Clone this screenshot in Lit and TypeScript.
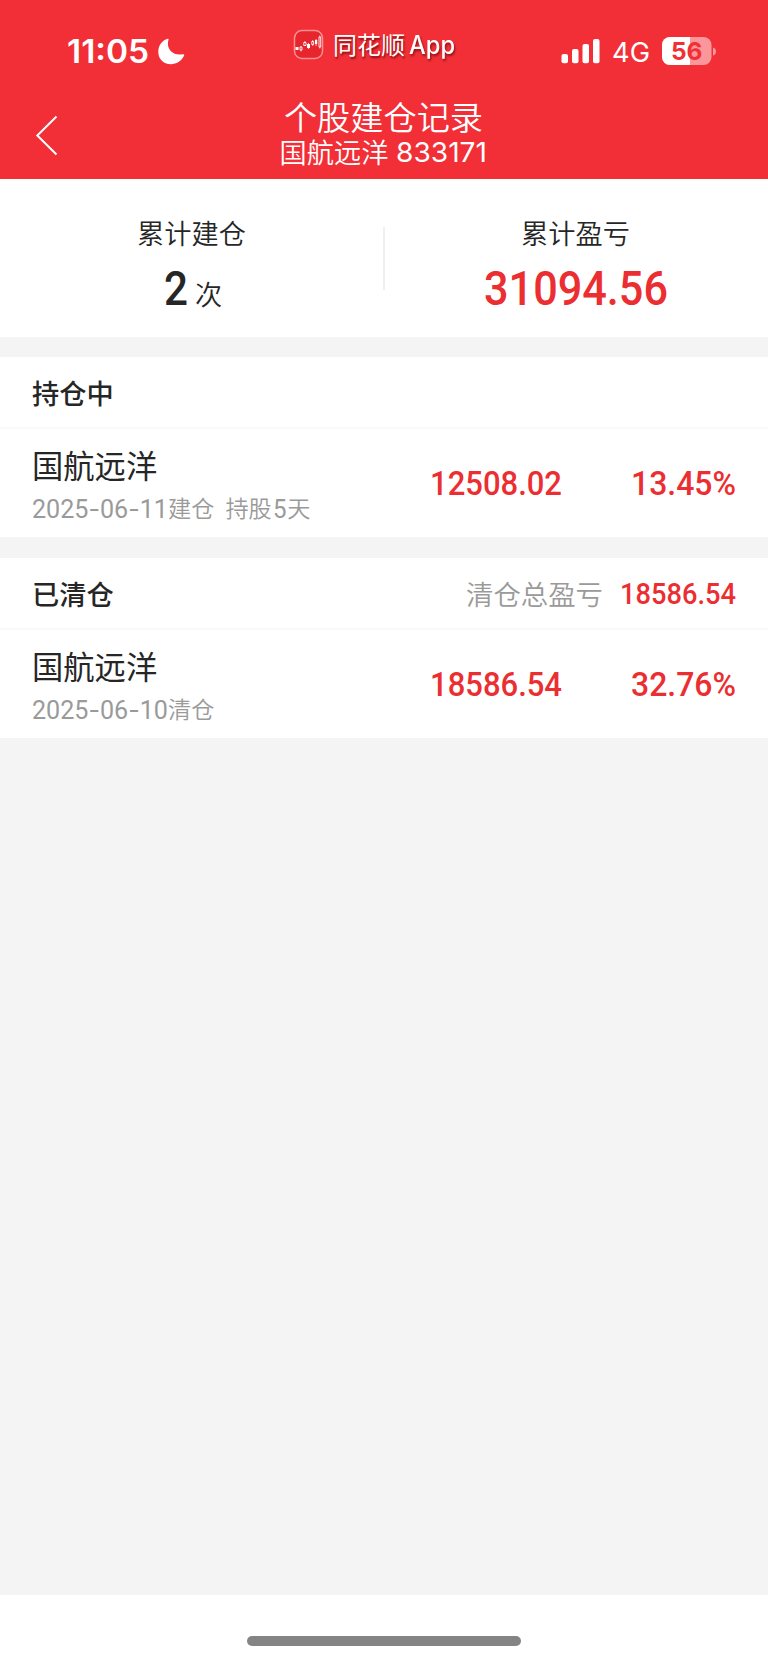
import { LitElement, html, css, svg } from "lit";
import { customElement, property } from "lit/decorators.js";

/** A single line of figures set to an exact advance width. */
@customElement("fit-text")
class FitText extends LitElement {
  @property() text = "";
  @property({ type: Number }) width = 100;
  @property({ type: Number }) size = 24;
  static styles = css`
    :host { display: block; flex: none; }
    svg { display: block; overflow: visible; }
    .dash { font-family: Inter, sans-serif; }
  `;
  render() {
    const h = Math.round(this.size * 1.2);
    const parts = this.text.split(/(-)/);
    return html`<svg width=${this.width} height=${h}>
      <text x="0" y=${this.size} fill="currentColor" font-size=${this.size}
        textLength=${this.width} lengthAdjust="spacingAndGlyphs">${parts.map((p) =>
          p === "-" ? svg`<tspan class="dash">-</tspan>` : svg`<tspan>${p}</tspan>`)}</text>
    </svg>`;
  }
}

@customElement("status-bar")
class StatusBar extends LitElement {
  static styles = css`
    :host { display: flex; height: 96px; color: #fff; font-family: Inter, sans-serif; align-items: flex-start; }
    svg { display: block; }
    .time { margin: 31px 0 0 67px; font-weight: 600; }
    .moon { margin: 38px 0 0 9px; }
    .icon { margin: 29px 0 0 108px; }
    .cjk { margin: 26px 0 0 9px; font: 400 24px/36px "Noto Sans CJK SC", sans-serif; width: 72px; white-space: nowrap; text-shadow: 1px 2px 2px rgba(90, 0, 0, .7); }
    .app { margin: 29px 0 0 4px; font-weight: 500; filter: drop-shadow(1px 2px 1px rgba(90, 0, 0, .65)); }
    .bars { margin: 38px 0 0 106px; }
    .net { margin: 35px 0 0 12px; }
    .battery { margin: 37px 0 0 12px; }
    .level { font-weight: 700; }
  `;
  render() {
    return html`
      <fit-text class="time" text="11:05" size="32" width="82"></fit-text>
      <svg class="moon" width="27" height="27" viewBox="0 0 27 27"><path fill="#fff" d="M9.7.8C10.500 .500 10.800 1 10.500 1.700C8 9.500 13.500 18 24.500 16.300C25.800 16 26.500 16.500 26.100 17.500C20.500 30.500 .3 28.500.3 13.700C.3 7.500 4 2.500 9.700.8Z"/></svg>
      <svg class="icon" width="31" height="31" viewBox="0 0 31 31">
        <rect x="1.500" y="1.500" width="28" height="28" rx="7.500" fill="#e6252d" stroke="#fa8f94" stroke-width="1.500"/>
        <g fill="#fff"><path d="M2.500 18h3v3h-3ZM14 15h3v4h-3ZM22 11h2.200v4H22Z"/></g>
        <path d="M15.500 14v6M23.100 10v7" stroke="#fff" stroke-width=".7"/>
        <g fill="none" stroke="#fff" stroke-width=".9"><path d="M7 18h2v3h-2ZM10.800 13.500h2.200v3h-2.200ZM18.800 12.500h1.800v3h-1.800ZM26 8h1.700v10h-1.700Z"/><path d="M8 17v1M8 21v1.500M11.900 12v1.500M19.700 11v1.500M19.700 15.500v1.500M26.800 6.500v1.500M26.800 18v1.500" stroke-width=".7"/></g>
      </svg>
      <div class="cjk">同花顺</div>
      <fit-text class="app" text="App" size="25" width="46"></fit-text>
      <svg class="bars" width="39" height="26" viewBox="0 0 39 26" fill="#fff"><rect x=".5" y="16" width="6.500" height="9.300" rx="2"/><rect x="11" y="11" width="6.500" height="14.300" rx="2"/><rect x="21.500" y="6" width="6.500" height="19.300" rx="2"/><rect x="32" y="1" width="6.500" height="24.300" rx="2"/></svg>
      <fit-text class="net" text="4G" size="27" width="38"></fit-text>
      <svg class="battery" width="56" height="29" viewBox="0 0 56 29">
        <defs><clipPath id="shell"><rect width="49.500" height="28" rx="8"/></clipPath></defs>
        <g clip-path="url(#shell)"><rect width="50" height="28" fill="#f9979b"/><rect width="28" height="28" fill="#fff"/></g>
        <path d="M51 10.500Q54 11.500 54 14.500T51 18.500Z" fill="#f9979b"/>
        <text class="level" x="9" y="23" font-size="24.500" textLength="31.500" lengthAdjust="spacingAndGlyphs" fill="#f22f37">56</text>
      </svg>`;
  }
}

@customElement("nav-header")
class NavHeader extends LitElement {
  static styles = css`
    :host { display: grid; grid-template-columns: 96px 1fr 96px; height: 83px; color: #fff; }
    .back { display: block; margin: 18px 0 0 35px; }
    .titles { display: flex; flex-direction: column; align-items: center; font-family: "Noto Sans CJK SC", sans-serif; }
    .title { font-size: 33.2px; line-height: 38px; height: 38px; margin-top: 1px; }
    .title, .sub { font-weight: 350; margin-right: 1px; }
    .sub { display: flex; gap: 8px; font-size: 27.200px; line-height: 33px; }
    .code { font-family: Inter, sans-serif; font-weight: 400; }
  `;
  render() {
    return html`
      <svg class="back" width="24" height="42" viewBox="0 0 24 42"><path d="M21.500 2.500L2.300 21.500L21.500 40.500" fill="none" stroke="#fff" stroke-width="2"/></svg>
      <div class="titles">
        <div class="title">个股建仓记录</div>
        <div class="sub"><span>国航远洋</span><fit-text class="code" text="833171" size="27" width="91"></fit-text></div>
      </div>`;
  }
}

@customElement("position-row")
class PositionRow extends LitElement {
  @property() name = "";
  @property() date = "";
  @property() action = "";
  @property() days = "";
  @property() profit = "";
  @property() rate = "";
  static styles = css`
    :host { display: grid; grid-template-columns: 398px 133px 1fr; height: 108px; padding: 0 32px; box-sizing: border-box; background: #fff; }
    .name { font-size: 31.300px; line-height: 40px; margin-top: 16px; color: #262626; }
    .meta { display: flex; font-size: 23.200px; line-height: 30px; margin-top: 7px; color: #9a9a9a; font-weight: 350; }
    .figures { font-family: Roboto, sans-serif; font-weight: 400; }
    .hold { margin-left: 11px; }
    .five { font-family: Roboto, sans-serif; font-weight: 400; margin: 0 1px; }
    .value { font-family: Roboto, sans-serif; font-weight: 500; color: #eb2e31; margin-top: 32px; }
    .rate { justify-self: end; }
  `;
  render() {
    return html`
      <div>
        <div class="name">${this.name}</div>
        <div class="meta">
          <fit-text class="figures" text=${this.date} size="25.500" width="136"></fit-text>
          <span>${this.action}</span>
          ${this.days ? html`<span class="hold">持股</span><fit-text class="five" text=${this.days} size="25.500" width="13.500"></fit-text><span>天</span>` : ""}
        </div>
      </div>
      <fit-text class="value" text=${this.profit} size="34" width="132"></fit-text>
      <fit-text class="value rate" text=${this.rate} size="34" width="105"></fit-text>`;
  }
}

@customElement("app-root")
class AppRoot extends LitElement {
  static styles = css`
    :host { display: flex; flex-direction: column; height: 1663px; background: #f4f4f4; font-family: "Noto Sans CJK SC", sans-serif; color: #262626; }
    .top { background: #f22f37; height: 179px; flex: none; }
    .summary { display: grid; grid-template-columns: 383px 2px 1fr; height: 158px; background: #fff; }
    .rule { background: #f0f0f0; height: 63px; margin-top: 48px; }
    .stat { display: flex; flex-direction: column; align-items: center; }
    .stat:last-child { margin-right: 2px; }
    .label { font-size: 27.200px; line-height: 36px; margin-top: 35px; font-weight: 350; }
    .count { display: flex; gap: 7px; font-size: 27.200px; line-height: 36px; margin-left: 3px; font-weight: 350; }
    .unit { margin-top: 25px; }
    .big { font-family: Roboto, sans-serif; font-weight: 500; margin-top: 7px; }
    .red { color: #eb2e31; }
    .section { margin-top: 20px; }
    .closed { margin-top: 21px; }
    .head { display: flex; height: 72px; box-sizing: border-box; border-bottom: 2px solid #f9f9f9; background: #fff; padding: 0 32px; font-size: 27.200px; line-height: 36px; }
    .caption { font-weight: 500; margin: 17px auto 0 0; }
    .total { color: #9a9a9a; margin: 17px 17px 0 0; font-weight: 350; font-size: 27.400px; }
    .sum { font-family: Roboto, sans-serif; font-weight: 500; margin-top: 16px; }
    .foot { margin-top: auto; height: 68px; background: #fff; display: flex; justify-content: center; }
    .home { width: 274px; height: 10px; border-radius: 5px; background: #848484; margin-top: 41px; }
  `;
  render() {
    return html`
      <div class="top"><status-bar></status-bar><nav-header></nav-header></div>
      <div class="summary">
        <div class="stat"><div class="label">累计建仓</div>
          <div class="count"><fit-text class="big" text="2" size="48" width="24"></fit-text><span class="unit">次</span></div></div>
        <div class="rule"></div>
        <div class="stat"><div class="label">累计盈亏</div>
          <fit-text class="big red" text="31094.56" size="48" width="184"></fit-text></div>
      </div>
      <div class="section">
        <div class="head"><span class="caption">持仓中</span></div>
        <position-row name="国航远洋" date="2025-06-11" action="建仓" days="5" profit="12508.02" rate="13.45%"></position-row>
      </div>
      <div class="closed">
        <div class="head"><span class="caption">已清仓</span><span class="total">清仓总盈亏</span><fit-text class="sum red" text="18586.54" size="30" width="116"></fit-text></div>
        <position-row name="国航远洋" date="2025-06-10" action="清仓" profit="18586.54" rate="32.76%"></position-row>
      </div>
      <div class="foot"><div class="home"></div></div>`;
  }
}
